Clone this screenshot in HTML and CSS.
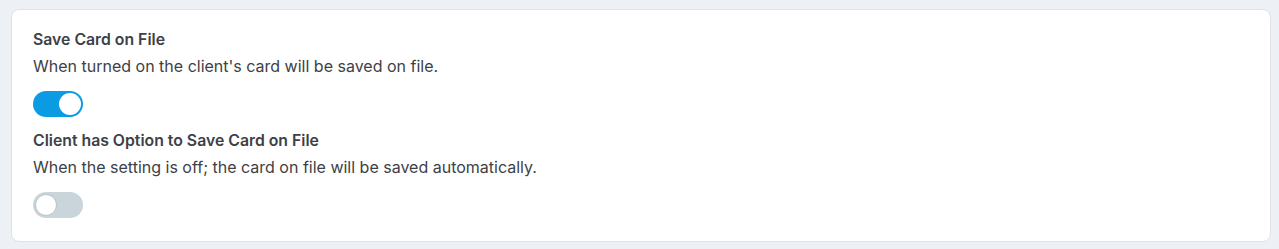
FILE: index.html
```html
<!DOCTYPE html>
<html lang="en">
<head>
    <meta charset="UTF-8">
    <title>Card Settings</title>
    <link rel="stylesheet" href="styles.css">
</head>
<body>
    <div class="card">
        <div class="setting">
            <h3>Save Card on File</h3>
            <p>When turned on the client's card will be saved on file.</p>
            <label class="switch">
                <input type="checkbox" checked>
                <span class="slider"></span>
            </label>
        </div>

        <div class="setting">
            <h3>Client has Option to Save Card on File</h3>
            <p>When the setting is off; the card on file will be saved automatically.</p>
            <label class="switch">
                <input type="checkbox">
                <span class="slider"></span>
            </label>
        </div>
    </div>
</body>
</html>
```

FILE: styles.css
```css
body {
    font-family: 'Inter', sans-serif;
    background: #edf1f5;
    margin: 0;
    padding: 9px 8px 7px 11px;
    color: #3d4146;
}

.card {
    background: #fff;
    border: 1px solid #dde3e9;
    border-radius: 8px;
    padding: 20px 21px 23px;
}

.setting h3 {
    font-size: 15.8px;
    font-weight: 600;
    line-height: 20px;
    margin: 0 0 6px;
}

.setting p {
    font-size: 16px;
    line-height: 20px;
    margin: 0 0 15px;
}

.switch {
    position: relative;
    display: block;
    width: 50px;
    height: 26px;
    margin-bottom: 14px;
}

.setting:last-child .switch {
    margin-bottom: 0;
}

.switch input {
    display: none;
}

.slider {
    position: absolute;
    inset: 0;
    background: #cad4db;
    border-radius: 13px;
    cursor: pointer;
    transition: background 0.3s ease;
}

.slider::before {
    content: "";
    position: absolute;
    left: 2px;
    top: 2px;
    width: 22px;
    height: 22px;
    border-radius: 50%;
    background: #fff;
    border: 1px solid #b7c2ca;
    box-sizing: border-box;
    transition: transform 0.3s ease;
}

.switch input:checked + .slider {
    background: #0b9be3;
}

.switch input:checked + .slider::before {
    border: 0;
    transform: translateX(24px);
}
```
